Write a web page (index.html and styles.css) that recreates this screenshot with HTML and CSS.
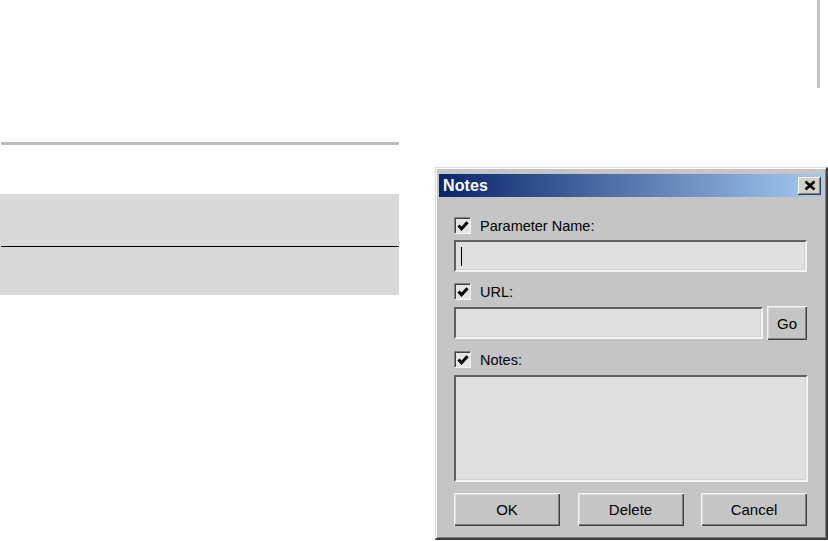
FILE: index.html
```html
<!DOCTYPE html>
<html>
<head>
<meta charset="utf-8">
<link rel="stylesheet" href="styles.css">
</head>
<body>
<div class="top"><div class="vline"></div></div>
<div class="main">
  <div class="left">
    <div class="rule"></div>
    <div class="panel">
      <div class="panel-top"></div>
      <div class="panel-bottom"></div>
    </div>
  </div>
  <div class="dialog">
    <div class="titlebar">
      <span class="title">Notes</span>
      <button class="close" type="button"><svg width="12" height="11" viewBox="0 0 12 11"><path d="M1.5 1.5 L10.5 9.5 M10.5 1.5 L1.5 9.5" stroke="#000" stroke-width="2.6" fill="none"/></svg></button>
    </div>
    <div class="content">
      <div class="check row1"><span class="box"><svg width="12" height="12" viewBox="0 0 12 12"><path d="M1.5 5.5 L4.5 8.8 L10.5 2.2" stroke="#000" stroke-width="3" fill="none"/></svg></span><span class="label">Parameter Name:</span></div>
      <div class="field full"><span class="caret"></span></div>
      <div class="check"><span class="box"><svg width="12" height="12" viewBox="0 0 12 12"><path d="M1.5 5.5 L4.5 8.8 L10.5 2.2" stroke="#000" stroke-width="3" fill="none"/></svg></span><span class="label">URL:</span></div>
      <div class="urlrow">
        <div class="field url"></div>
        <button class="btn go" type="button">Go</button>
      </div>
      <div class="check"><span class="box"><svg width="12" height="12" viewBox="0 0 12 12"><path d="M1.5 5.5 L4.5 8.8 L10.5 2.2" stroke="#000" stroke-width="3" fill="none"/></svg></span><span class="label">Notes:</span></div>
      <div class="field notes"></div>
      <div class="buttons">
        <button class="btn wide" type="button">OK</button>
        <button class="btn wide" type="button">Delete</button>
        <button class="btn wide" type="button">Cancel</button>
      </div>
    </div>
  </div>
</div>
</body>
</html>
```

FILE: styles.css
```css
html, body {
  margin: 0;
  padding: 0;
  background: #ffffff;
  width: 828px;
  height: 541px;
  overflow: hidden;
  font-family: "Liberation Sans", Arial, sans-serif;
}

.top {
  height: 142px;
  display: flex;
}

.vline {
  margin-left: 817px;
  width: 3px;
  height: 88px;
  background: #c3c3c3;
}

.main {
  display: flex;
  align-items: flex-start;
}

.left {
  width: 399px;
  flex: none;
}

.rule {
  margin-left: 1px;
  width: 398px;
  height: 3px;
  background: #bcbcbc;
}

.panel {
  margin-top: 49px;
  width: 399px;
  background: #d9d9d9;
  display: flex;
  flex-direction: column;
}

.panel-top {
  height: 52px;
  border-bottom: 1px solid #000;
  margin-left: 1px;
}

.panel-bottom {
  height: 48px;
}

.dialog {
  margin-left: 36px;
  margin-top: 25px;
  width: 393px;
  height: 373px;
  box-sizing: border-box;
  background: #c5c5c5;
  border-top: 1px solid #dcdcdc;
  border-left: 1px solid #dcdcdc;
  border-right: 2px solid #404040;
  border-bottom: 2px solid #404040;
  box-shadow: inset 1px 1px 0 #ffffff, inset -1px -1px 0 #808080;
  padding: 6px 3px 3px 3px;
  flex: none;
  display: flex;
  flex-direction: column;
}

.titlebar {
  height: 23px;
  background: linear-gradient(to right, #0a246a, #a6caf0);
  display: flex;
  align-items: center;
  justify-content: space-between;
  padding: 0 2px 0 4px;
  flex: none;
}

.title {
  color: #ffffff;
  font-weight: bold;
  font-size: 16px;
  letter-spacing: 0.1px;
}

.close {
  width: 23px;
  height: 18px;
  padding: 0;
  margin: 0;
  background: #d4d0c8;
  border: none;
  box-shadow: inset -1px -1px 0 #404040, inset 1px 1px 0 #ffffff, inset -2px -2px 0 #808080;
  display: flex;
  align-items: center;
  justify-content: center;
}

.content {
  padding: 20px 15px 0 15px;
  display: flex;
  flex-direction: column;
}

.check {
  display: flex;
  align-items: center;
  height: 17px;
  margin-top: 11px;
}

.check.row1 {
  margin-top: 0;
}

.box {
  width: 17px;
  height: 17px;
  box-sizing: border-box;
  background: #e4e4e4;
  border-top: 1px solid #808080;
  border-left: 1px solid #808080;
  border-right: 1px solid #f4f4f4;
  border-bottom: 1px solid #f4f4f4;
  box-shadow: inset 1px 1px 0 #404040;
  display: flex;
  align-items: center;
  justify-content: center;
  flex: none;
}

.label {
  margin-left: 9px;
  font-size: 14.5px;
  color: #000;
}

.field {
  box-sizing: border-box;
  background: #e0e0e0;
  border-top: 2px solid #606060;
  border-left: 2px solid #606060;
  border-right: 2px solid #f4f4f4;
  border-bottom: 2px solid #f4f4f4;
  box-shadow: inset -1px -1px 0 #d0d0d0;
}

.full {
  margin-top: 6px;
  height: 32px;
  width: 353px;
  display: flex;
  align-items: center;
  padding-left: 5px;
}

.caret {
  width: 1px;
  height: 19px;
  background: #000;
}

.urlrow {
  margin-top: 6px;
  display: flex;
  align-items: center;
  width: 353px;
  gap: 4px;
}

.url {
  width: 309px;
  height: 32px;
}

.btn {
  box-sizing: border-box;
  background: #c5c5c5;
  border: none;
  padding: 0;
  margin: 0;
  font-family: "Liberation Sans", Arial, sans-serif;
  font-size: 15px;
  color: #000;
  box-shadow: inset 1px 1px 0 #f4f4f4, inset -1px -1px 0 #404040, inset -2px -2px 0 #808080, inset 2px 2px 0 #dcdcdc;
}

.go {
  width: 40px;
  height: 34px;
}

.notes {
  margin-top: 7px;
  width: 354px;
  height: 107px;
}

.buttons {
  margin-top: 11px;
  display: flex;
  justify-content: space-between;
  width: 353px;
}

.wide {
  width: 106px;
  height: 33px;
}
```
